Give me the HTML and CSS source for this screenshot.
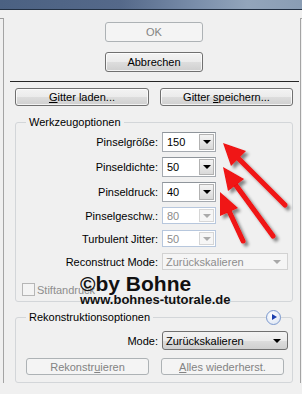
FILE: index.html
```html
<!DOCTYPE html>
<html>
<head>
<meta charset="utf-8">
<title>Verflüssigen</title>
<link rel="stylesheet" href="styles.css">
</head>
<body>
<div class="titlebar"></div>

<div class="main">
  <div class="edge-l"></div>

  <div class="content">
    <div class="defaults">
      <button class="btn btn-main" disabled>OK</button>
      <button class="btn btn-main">Abbrechen</button>
    </div>

    <hr class="sep">

    <div class="gitter">
      <button class="btn btn-load"><u>G</u>itter laden...</button>
      <button class="btn btn-save">Gitter <u>s</u>peichern...</button>
    </div>

    <!-- Werkzeugoptionen -->
    <fieldset class="group tools">
      <legend>Werkzeugoptionen</legend>
      <div class="rows">
        <label>Pinselgröße:</label>
        <div class="spin"><span>150</span><i class="drop"></i></div>
        <label>Pinseldichte:</label>
        <div class="spin"><span>50</span><i class="drop"></i></div>
        <label>Pinseldruck:</label>
        <div class="spin"><span>40</span><i class="drop"></i></div>
        <label>Pinselgeschw.:</label>
        <div class="spin off"><span>80</span><i class="drop"></i></div>
        <label>Turbulent Jitter:</label>
        <div class="spin off"><span>50</span><i class="drop"></i></div>
        <label>Reconstruct Mode:</label>
        <div class="combo off"><span>Zurückskalieren</span><i class="tri"></i></div>
      </div>
      <label class="check"><span class="box"></span>Stiftandruck</label>
    </fieldset>

    <!-- Rekonstruktionsoptionen -->
    <fieldset class="group recon">
      <legend>Rekonstruktionsoptionen</legend>
      <span class="info"></span>
      <div class="rows">
        <label>Mode:</label>
        <div class="combo"><span>Zurückskalieren</span><i class="tri"></i></div>
      </div>
      <div class="recon-btns">
        <button class="btn btn-recon" disabled>Rekonstr<u>u</u>ieren</button>
        <button class="btn btn-recon" disabled><u>A</u>lles wiederherst.</button>
      </div>
    </fieldset>
  </div>

  <div class="edge-r"></div>
</div>

<div class="mark">
  <span class="big">©by Bohne</span>
  <span class="url">www.bohnes-tutorale.de</span>
</div>

<svg class="arrows" width="302" height="394" viewBox="0 0 302 394">
  <defs>
    <filter id="shadow" x="-30%" y="-30%" width="170%" height="170%">
      <feDropShadow dx="3" dy="3" stdDeviation="1.6" flood-color="#000" flood-opacity="0.45"/>
    </filter>
  </defs>
  <g fill="#f01212" stroke="#f01212" stroke-width="5" stroke-linecap="round" filter="url(#shadow)">
    <line x1="285" y1="205" x2="237" y2="157"/>
    <polygon stroke="none" points="223,143 246,151 231,166"/>
    <line x1="273" y1="236" x2="235" y2="184"/>
    <polygon stroke="none" points="223,167 244,179 228,191"/>
    <line x1="243" y1="241" x2="229" y2="211"/>
    <polygon stroke="none" points="220,192 238,208 220,216"/>
  </g>
</svg>
</body>
</html>
```

FILE: styles.css
```css
body {
  margin: 0;
  width: 302px;
  height: 394px;
  overflow: hidden;
  position: relative;
  background: #f0f0f0;
  font: 11px "Liberation Sans", Arial, sans-serif;
  color: #000;
}

.titlebar {
  height: 9px;
  border-bottom: 1px solid #223043;
  background: linear-gradient(90deg, #4b6182 0%, #55698a 40%, #7a8eaa 65%, #93a5bb 82%, #8a9db4 100%);
}

.main { display: flex; }

.edge-l {
  width: 3px;
  margin-top: 8px;
  border-top: 1px solid #9c9c9c;
  border-right: 1px solid #a4a4a4;
}
.edge-r {
  width: 1px;
  margin-top: 8px;
  border-top: 1px solid #a4a4a4;
  border-left: 1px solid #a4a4a4;
}
.content { flex: 1; }

/* buttons */
.btn {
  font: 11px "Liberation Sans", Arial, sans-serif;
  color: #000;
  padding: 0;
  box-sizing: border-box;
  border: 1px solid #707070;
  border-radius: 3px;
  background: linear-gradient(#f3f3f3 0%, #ebebeb 50%, #dddddd 51%, #cfcfcf 100%);
  box-shadow: inset 0 0 0 1px rgba(255, 255, 255, 0.75);
}
.btn:disabled {
  color: #838383;
  border-color: #adb2b5;
  background: #f4f4f4;
  box-shadow: none;
}

.defaults {
  display: flex;
  flex-direction: column;
  align-items: flex-start;
  gap: 10px;
  padding: 12px 0 0 101px;
}
.btn-main { width: 98px; height: 20px; }

.sep {
  margin: 9px 1px 0 6px;
  height: 0;
  border: 0;
  border-top: 1px solid #262626;
}

.gitter {
  display: flex;
  gap: 11px;
  margin: 6px 0 0 11px;
}
.btn-load { width: 134px; height: 18px; }
.btn-save { width: 133px; height: 18px; }

/* group boxes */
.group {
  position: relative;
  width: 278px;
  min-width: 0;
  box-sizing: border-box;
  margin: 9px 0 0 11px;
  padding: 0;
  border: 1px solid #d3d6d9;
  border-radius: 3px;
}
.group legend {
  margin-left: 10px;
  padding: 0 3px;
  line-height: 14px;
}
.tools { padding: 3px 0 5px; }
.recon { margin-top: 8px; padding: 7px 0 7px; }

.rows {
  display: grid;
  grid-template-columns: 142px max-content;
  column-gap: 4px;
  align-items: center;
}
.tools .rows {
  grid-template-rows: 20px 20px 20px 18px 18px 17px;
  row-gap: 5px;
}
.rows label { text-align: right; }

/* spin combos */
.spin {
  display: flex;
  align-items: center;
  width: 54px;
  height: 20px;
  box-sizing: border-box;
  border: 1px solid #a5aab0;
  border-top-color: #8f959b;
  background: #fff;
}
.spin span { flex: 1; padding-left: 4px; }
.drop {
  position: relative;
  width: 15px;
  height: 16px;
  margin-right: 1px;
  box-sizing: border-box;
  border: 1px solid #b2b2b2;
  background: linear-gradient(#f4f4f4, #d9d9d9);
}
.drop::after, .tri::after {
  content: "";
  position: absolute;
  left: 50%;
  top: 50%;
  margin: -2px 0 0 -4px;
  border-left: 4px solid transparent;
  border-right: 4px solid transparent;
  border-top: 4px solid #000;
}
.spin.off {
  height: 17px;
  align-self: start;
  border-color: #b7c7dd;
  color: #8b8b8b;
}
.spin.off .drop {
  height: 13px;
  border-color: #d6d6d6;
  background: #f6f6f6;
}
.spin.off .drop::after { border-top-color: #ababab; }

/* dropdowns */
.combo {
  display: flex;
  align-items: center;
  width: 126px;
  height: 19px;
  box-sizing: border-box;
  border: 1px solid #707070;
  border-radius: 3px;
  background: linear-gradient(#f3f3f3 0%, #ebebeb 50%, #dddddd 51%, #cfcfcf 100%);
}
.combo span { flex: 1; padding-left: 3px; }
.tri {
  position: relative;
  width: 8px;
  height: 5px;
  margin-right: 6px;
}
.combo.off {
  height: 17px;
  border-color: #d2d2d2;
  border-radius: 0;
  background: #f5f5f5;
  color: #8d8d8d;
}
.combo.off .tri::after { border-top-color: #a8a8a8; }

.check {
  display: flex;
  align-items: center;
  margin: 13px 0 0 6px;
  height: 13px;
  color: #8d8d8d;
}
.check .box {
  width: 13px;
  height: 13px;
  box-sizing: border-box;
  margin-right: 2px;
  border: 1px solid #b6b6b6;
  background: #f4f4f4;
}

.info {
  position: absolute;
  right: 11px;
  top: -14px;
  width: 15px;
  height: 15px;
  box-sizing: border-box;
  border: 1px solid #7b99cf;
  border-radius: 50%;
  background: radial-gradient(circle at 40% 35%, #ffffff, #d6e0f1);
}
.info::after {
  content: "";
  position: absolute;
  left: 5px;
  top: 3px;
  border-left: 5px solid #1b3fae;
  border-top: 3.5px solid transparent;
  border-bottom: 3.5px solid transparent;
}

.recon-btns {
  display: flex;
  gap: 12px;
  margin: 8px 0 0 10px;
}
.btn-recon { width: 123px; height: 17px; }

/* watermark + arrows lie over the dialog */
.mark {
  position: absolute;
  left: 80px;
  top: 272px;
  font-weight: bold;
  color: #111;
}
.mark .big { display: block; font-size: 21px; line-height: 24px; }
.mark .url { display: block; margin-top: -3px; font-size: 13px; line-height: 14px; }

.arrows {
  position: absolute;
  left: 0;
  top: 0;
  pointer-events: none;
}
```
